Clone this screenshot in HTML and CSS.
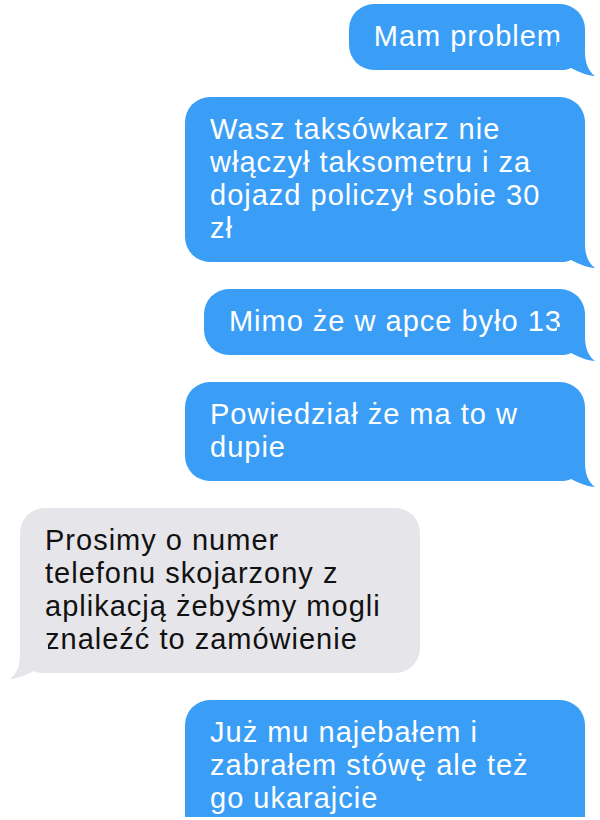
FILE: index.html
```html
<!DOCTYPE html>
<html lang="pl">
<head>
<meta charset="utf-8">
<link rel="stylesheet" href="styles.css">
</head>
<body>
<div class="chat">
  <div class="bubble out">Mam problem<svg class="tail" viewBox="0 0 40 36" width="40" height="36"><path d="M0 0H28V10C28 20 31 29 38 34C31 34 22 30 14 26C10 28 6 28 0 28Z"/></svg></div>
  <div class="bubble out wide">Wasz taksówkarz nie<br>włączył taksometru i za<br>dojazd policzył sobie 30<br>zł<svg class="tail" viewBox="0 0 40 36" width="40" height="36"><path d="M0 0H28V10C28 20 31 29 38 34C31 34 22 30 14 26C10 28 6 28 0 28Z"/></svg></div>
  <div class="bubble out">Mimo że w apce było 13<svg class="tail" viewBox="0 0 40 36" width="40" height="36"><path d="M0 0H28V10C28 20 31 29 38 34C31 34 22 30 14 26C10 28 6 28 0 28Z"/></svg></div>
  <div class="bubble out wide">Powiedział że ma to w<br>dupie<svg class="tail" viewBox="0 0 40 36" width="40" height="36"><path d="M0 0H28V10C28 20 31 29 38 34C31 34 22 30 14 26C10 28 6 28 0 28Z"/></svg></div>
  <div class="bubble in wide">Prosimy o numer<br>telefonu skojarzony z<br>aplikacją żebyśmy mogli<br>znaleźć to zamówienie<svg class="tail" viewBox="0 0 40 36" width="40" height="36"><path d="M0 0H28V10C28 20 31 29 38 34C31 34 22 30 14 26C10 28 6 28 0 28Z"/></svg></div>
  <div class="bubble out wide last">Już mu najebałem i<br>zabrałem stówę ale też<br>go ukarajcie</div>
</div>
</body>
</html>
```
FILE: styles.css
```css
html, body {
  margin: 0;
  padding: 0;
  background: #ffffff;
  overflow: hidden;
}
.chat {
  width: 600px;
  height: 820px;
  display: flex;
  flex-direction: column;
  gap: 27px;
  padding-top: 4px;
  box-sizing: border-box;
  font-family: "Liberation Sans", Arial, sans-serif;
  font-size: 29px;
  line-height: 33px;
  letter-spacing: 1px;
}
.bubble {
  position: relative;
  border-radius: 25px;
  padding: 16px 23px 17px 25px;
  white-space: nowrap;
  box-sizing: border-box;
}
.bubble.wide {
  width: 400px;
}
.out {
  align-self: flex-end;
  margin-right: 15px;
  background: #3b9ef6;
  color: #ffffff;
}
.in {
  align-self: flex-start;
  margin-left: 20px;
  background: #e5e5ea;
  color: #111111;
}
.tail {
  position: absolute;
  bottom: -8px;
  display: block;
}
.out .tail {
  right: -12px;
  fill: #3b9ef6;
}
.in .tail {
  left: -12px;
  fill: #e5e5ea;
  transform: scaleX(-1);
}
.last {
  padding-bottom: 2px;
  border-bottom-left-radius: 0;
  border-bottom-right-radius: 0;
}
```
